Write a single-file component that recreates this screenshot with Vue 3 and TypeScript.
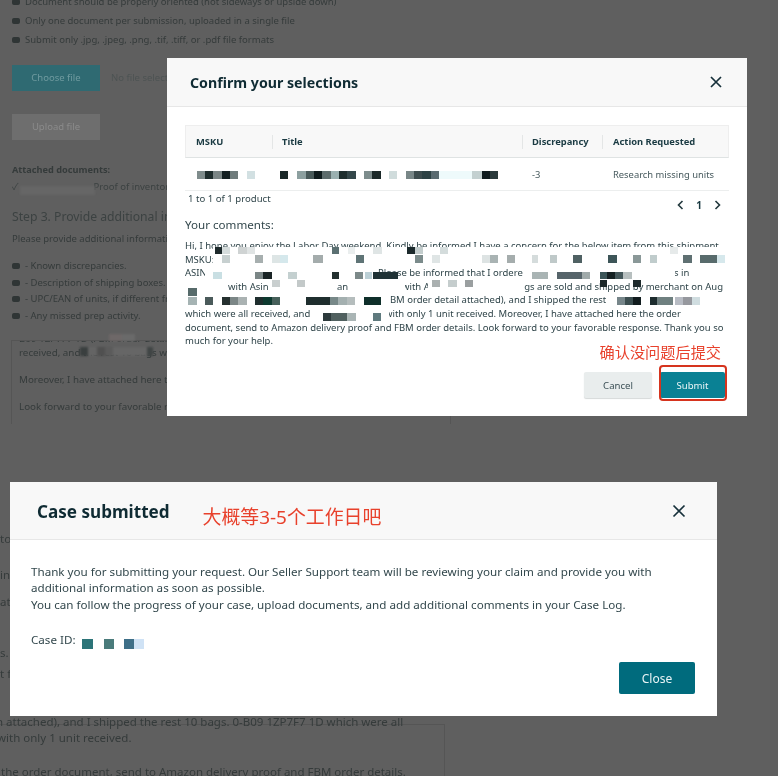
<script setup lang="ts">
type Cell = [number, number, number, number, string]
const W = '#ffffff'
const whites: Cell[] = [
  [213,247,515,20,W],[205,267,173,14,W],[523,267,152,14,W],[690,267,38,14,W],
  [185,281,43,14,W],[270,281,67,14,W],[348,281,57,14,W],[428,281,96,14,W],
  [185,294,205,14,W],[612,294,114,14,W],[310,308,79,13,W]
]
const row = (y: number, h: number, cells: [number, number, string][]): Cell[] =>
  cells.map(([a, b, c]) => [a, y, b - a, h, c] as Cell)
const cells: Cell[] = [
  ...whites,
  ...row(171,8,[[197,205,'#7f8c8c'],[205,213,'#1f2e2e'],[213,222,'#7b8686'],[222,230,'#142022'],[230,238,'#6f7c7c'],[247,255,'#d2e0e2'],
    [280,288,'#1a2828'],[297,306,'#8da0a0'],[306,314,'#495a5a'],[314,322,'#101c1e'],[322,331,'#5d6c6c'],[331,339,'#9ab0b0'],[339,347,'#1e2e2e'],[347,356,'#34474a'],
    [364,372,'#7d8c8c'],[372,381,'#1a2828'],[389,397,'#d0dcdc'],[406,414,'#788687'],[414,422,'#3d4c4e'],[422,431,'#2d4244'],[431,439,'#5a6b70'],[439,472,'#eefafb'],[472,482,'#c3d0d0'],[482,490,'#101c1e'],[490,498,'#2b3a3c']]),
  ...row(247,7,[[215,222,'#1e2a2c'],[222,230,'#d5dcdc'],[238,247,'#cfd3d3'],[247,255,'#e0e4e4'],[332,339,'#5b7072'],[348,355,'#eaeeee'],[373,382,'#dfe5e5'],[407,415,'#1c2a2c'],[415,423,'#c3cdcd'],[440,448,'#d4dcdc'],[670,678,'#e6eaea']]),
  ...row(255,8,[[222,230,'#c7d0d0'],[255,263,'#a7afaf'],[272,280,'#dde5e5'],[280,288,'#d5e8ec'],[313,323,'#a4acac'],[356,364,'#5f7476'],[415,423,'#7b8b8b'],[432,440,'#dfe5e5'],
    [482,490,'#dde3e3'],[490,498,'#a9b3b3'],[507,515,'#a5adad'],[532,538,'#d5dcdc'],[550,557,'#bfc9c9'],[573,582,'#4f6163'],[608,617,'#3d5558'],[633,641,'#8a9898'],[650,657,'#c0cccc'],[683,692,'#5f7072'],[700,717,'#586b6c'],[717,725,'#d6e8ec']]),
  ...row(272,7,[[213,222,'#c9dfe3'],[255,263,'#7b8686'],[263,272,'#1a2425'],[288,297,'#c4d0d0'],[332,339,'#23302f'],[355,363,'#7c8989'],[365,372,'#bcd0d6'],[373,398,'#1f3235'],
    [532,548,'#a9b4b4'],[557,582,'#56646a'],[582,590,'#a0aaaa'],[600,607,'#3b5558'],[607,615,'#142022'],[615,623,'#44575a'],[623,632,'#b7bfbf']]),
  ...row(280,7,[[272,280,'#c9cfcf'],[297,305,'#c3c9c9'],[432,440,'#aab0b0'],[448,457,'#c5cdcd'],[465,473,'#9a9fa0'],[600,607,'#1b2729'],[633,641,'#1e2a2c']]),
  ...row(288,8,[[188,197,'#566a6a']]),
  ...row(297,8,[[188,197,'#a5b3b3'],[205,213,'#4a5a5a'],[222,230,'#25302f'],[230,238,'#7b8686'],[238,247,'#aab2b2'],[255,263,'#1f2e2e'],[263,272,'#0e3a30'],[272,280,'#46605a'],[306,330,'#1f2e2e'],[330,338,'#778888'],[338,347,'#a4b0b0'],[347,355,'#b5bdbd'],[364,381,'#0f2f2a'],
    [617,625,'#77868a'],[625,633,'#3c4e50'],[633,641,'#111c1e'],[650,657,'#1d2c2e'],[657,673,'#6f8080'],[675,683,'#b8bcc4'],[683,692,'#96989e'],[692,700,'#d0dde0']]),
  ...row(313,8,[[323,331,'#2d3a3c'],[331,347,'#50605f'],[347,356,'#aab5b5'],[373,381,'#5f7a7e']]),
  ...row(639,10,[[82,93,'#2c7478'],[104,114,'#4a7b7b'],[124,134,'#3e6f88'],[134,144,'#cfe2f5']])
]
const cellStyle = (c: Cell) => ({ left: c[0] + 'px', top: c[1] + 'px', width: c[2] + 'px', height: c[3] + 'px', background: c[4] })
const bgCells: Cell[] = [
  ...row(334,7,[[109,122,'#6e6868'],[122,135,'#6a6a6a']]),
  ...row(347,9,[[80,88,'#3a3f3f'],[88,97,'#646464'],[97,105,'#505050'],[105,113,'#5b5b5b'],[113,147,'#666666'],[147,153,'#404545']]),
  ...row(186,9,[[20,95,'#666666']])
]
// Each comment line is a row of [text, column width]; the gaps are what the redaction later covers.
const comment: [string, number][][] = [
  [['Hi, I hope you enjoy the Labor Day weekend. Kindly be informed I have a concern for the below item from this shipment', 545]],
  [['MSKU:', 545]],
  [['ASIN', 193], ['Please be informed that I ordered', 279], ['bags in', 73]],
  [['', 43], ['with Asin', 109], ['and', 65], ['with Asin', 111], ['bags are sold and shipped by merchant on Aug', 217]],
  [['', 200], ['FBM order detail attached), and I shipped the rest', 345]],
  [['which were all received, and', 200], ['with only 1 unit received. Moreover, I have attached here the order', 345]],
  [['document, send to Amazon delivery proof and FBM order details. Look forward to your favorable response. Thank you so', 545]],
  [['much for your help.', 545]]
]
const steps = ['- Known discrepancies.', '- Description of shipping boxes.', '- UPC/EAN of units, if different from the listing.', '- Any missed prep activity.']
const rules = ['Document should be properly oriented (not sideways or upside down)', 'Only one document per submission, uploaded in a single file', 'Submit only .jpg, .jpeg, .png, .tif, .tiff, or .pdf file formats']
</script>

<template>
  <div class="screen">
    <div class="page">
      <ul class="rules">
        <li v-for="r in rules" :key="r">{{ r }}</li>
      </ul>
      <div class="file-row">
        <span class="bg-btn teal">Choose file</span>
        <span>No file selected</span>
      </div>
      <span class="bg-btn grey">Upload file</span>
      <div class="attached">Attached documents:</div>
      <div class="attached-item"><span>✓</span><span>Proof of inventory</span></div>
      <h3 class="step">Step 3. Provide additional information</h3>
      <p class="step-note">Please provide additional information about your request</p>
      <ul class="notes">
        <li v-for="s in steps" :key="s">{{ s }}</li>
      </ul>
      <div class="box-top">
        <p class="cut">B09 1ZP7F7 1D (FBM order detail attached), and I shipped</p>
        <p>received, and the rest 10 bags with only 1 unit</p>
        <p class="para">Moreover, I have attached here the order document</p>
        <p class="para">Look forward to your favorable response.</p>
      </div>
      <div class="frags">
        <p class="f1">to</p>
        <p class="f2">in</p>
        <p class="f3">ati</p>
        <p class="f4">s.</p>
        <p class="f5">t f</p>
      </div>
      <div class="box-bottom">
        <p class="first">n attached), and I shipped the rest 10 bags. 0-B09 1ZP7F7 1D which were all</p>
        <p class="second">with only 1 unit received.</p>
        <p class="para">the order document, send to Amazon delivery proof and FBM order details.</p>
      </div>
    </div>

    <div class="mosaic-layer dim-layer">
      <i v-for="(c, i) in bgCells" :key="i" :style="cellStyle(c)"></i>
    </div>

    <section class="modal confirm">
      <header class="head">
        <h2>Confirm your selections</h2>
        <svg class="x" width="12" height="12" viewBox="0 0 12 12"><path d="M1 1l10 10M11 1L1 11" /></svg>
      </header>
      <div class="body">
        <div class="tbl">
          <div class="tr th">
            <span>MSKU</span><span>Title</span><span>Discrepancy</span><span>Action Requested</span>
          </div>
          <div class="tr td">
            <span></span><span></span><span>-3</span><span>Research missing units</span>
          </div>
        </div>
        <div class="pager-row">
          <span>1 to 1 of 1 product</span>
          <span class="pager">
            <svg width="7" height="10" viewBox="0 0 7 10"><path d="M5.5 1L1.5 5l4 4" /></svg>
            <b>1</b>
            <svg width="7" height="10" viewBox="0 0 7 10"><path d="M1.5 1l4 4-4 4" /></svg>
          </span>
        </div>
        <div class="label">Your comments:</div>
        <div class="comment">
          <div v-for="(l, i) in comment" :key="i" class="line">
            <span v-for="(s, j) in l" :key="j" :style="{ width: s[1] + 'px' }">{{ s[0] }}</span>
          </div>
        </div>
        <div class="note-red">确认没问题后提交</div>
        <div class="foot">
          <button class="cancel">Cancel</button>
          <button class="submit">Submit</button>
        </div>
      </div>
    </section>

    <section class="modal done">
      <header class="head">
        <h2>Case submitted</h2>
        <span class="note-big">大概等3-5个工作日吧</span>
        <svg class="x" width="14" height="14" viewBox="0 0 14 14"><path d="M1.5 1.5l11 11M12.5 1.5l-11 11" /></svg>
      </header>
      <div class="body">
        <p>Thank you for submitting your request. Our Seller Support team will be reviewing your claim and provide you with<br />additional information as soon as possible.<br />You can follow the progress of your case, upload documents, and add additional comments in your Case Log.</p>
        <p class="case-id">Case ID:</p>
        <div class="foot"><button class="close">Close</button></div>
      </div>
    </section>

    <div class="mosaic-layer">
      <i v-for="(c, i) in cells" :key="i" :style="cellStyle(c)"></i>
    </div>
    <div class="red-ring"></div>
  </div>
</template>

<style>
html, body { margin: 0; background: #5f5f5f; }
</style>

<style scoped>
.screen {
  position: relative;
  width: 778px;
  height: 776px;
  overflow: hidden;
  background: #5f5f5f;
  font-family: "Noto Sans", "Noto Sans CJK SC", sans-serif;
}
p, h2, h3, ul { margin: 0; padding: 0; }

/* dimmed page */
.page {
  display: flex;
  flex-direction: column;
  align-items: flex-start;
  height: 776px;
  padding-left: 12px;
  box-sizing: border-box;
  color: #353b3b;
  font-size: 9.5px;
  line-height: 14px;
  white-space: nowrap;
  filter: blur(0.7px);
}
.page > * { flex-shrink: 0; }
.rules { margin-top: -8px; list-style: none; }
.rules li, .notes li { display: flex; align-items: center; gap: 5px; }
.rules li { height: 19px; }
.rules li::before, .notes li::before {
  content: "";
  width: 8px;
  height: 6px;
  border-radius: 2px;
  background: #2f3535;
}
.file-row { display: flex; align-items: center; gap: 11px; margin-top: 16px; color: #4d5353; }
.bg-btn { display: flex; align-items: center; justify-content: center; width: 88px; height: 26px; }
.teal { background: #2f6a72; color: #6f9a9f; }
.grey { margin-top: 23px; background: #6e6e6e; color: #8b8b8b; }
.attached { margin-top: 23px; font-size: 9.2px; font-weight: 700; }
.attached-item { display: flex; gap: 75px; margin-top: 3px; color: #3c4242; }
.step { margin-top: 14px; font-size: 12.2px; font-weight: 400; line-height: 18px; color: #3c4242; }
.step-note { margin-top: 6px; }
.notes { margin-top: 12px; list-style: none; }
.notes li { height: 16.6px; }
.box-top {
  width: 440px;
  height: 84px;
  margin: 16px 0 0 -1px;
  padding-left: 7px;
  overflow: hidden;
  box-sizing: border-box;
  border: 1px solid #555;
  border-bottom: 0;
  font-size: 9.8px;
  line-height: 13.5px;
}
.box-top .cut { margin-top: -9px; }
.box-top .para { margin-top: 13.5px; }
.frags { margin: 107px 0 0 -12px; font-size: 11.5px; line-height: 16px; }
.f2 { margin-top: 20px; }
.f3 { margin-top: 11px; }
.f4 { margin-top: 35px; }
.f5 { margin-top: 5px; }
.box-bottom {
  width: 445px;
  height: 80px;
  margin: 42px 0 0 -12px;
  box-sizing: border-box;
  border-top: 1px solid #555;
  border-right: 1px solid #555;
  font-size: 11.5px;
  line-height: 16.4px;
}
.box-bottom .first { margin: -11px 0 0 -4px; }
.box-bottom .second { margin: -1px 0 0 -3px; }
.box-bottom .para { margin: 18px 0 0 1px; }

/* modals */
.modal {
  position: absolute;
  display: flex;
  flex-direction: column;
  background: #fff;
  color: #33484d;
  box-sizing: border-box;
  filter: blur(0.3px);
}
.head {
  display: flex;
  flex-shrink: 0;
  align-items: center;
  background: #f8f8f8;
  border-bottom: 1px solid #e7e7e7;
  box-sizing: border-box;
}
.head h2 { color: #0f2b33; font-weight: 700; }
.x { margin-left: auto; fill: none; stroke: #16303a; stroke-width: 1.7; }
.foot { display: flex; justify-content: flex-end; margin-top: auto; }
.body { display: flex; flex: 1; flex-direction: column; }
button {
  font-family: inherit;
  padding: 0;
  border: 0;
  border-radius: 2px;
  cursor: pointer;
}

.confirm { left: 167px; top: 58px; width: 580px; height: 358px; }
.confirm .head { height: 49px; padding: 0 25px 0 23px; }
.confirm .head h2 { font-size: 14.2px; }
.confirm .body { padding: 18px; }
.tbl { font-size: 9.4px; }
.tr { display: grid; align-items: center; }
.tr span { padding-left: 10px; }
.tr span:first-child { padding-left: 11px; }
.th { grid-template-columns: 86px 250px 80px 1fr; height: 33px; background: #f8f8f8; border: 1px solid #eee; border-bottom: 1px solid #dfe3e3; box-sizing: border-box; color: #1a3a42; font-weight: 700; }
.th span { padding-left: 9px; }
.th span:first-child { padding-left: 10px; }
.th span:last-child { padding-left: 10px; }
.th span + span { border-left: 1px solid #e4e6e6; line-height: 14px; }
.td { grid-template-columns: 87px 250px 80px 1fr; height: 33px; border-bottom: 1px solid #eceeee; box-sizing: border-box; color: #46595d; }
.td span:last-child { padding-left: 11px; }
.pager-row { display: flex; justify-content: space-between; align-items: center; height: 15px; padding: 0 8px 0 3px; font-size: 9.6px; }
.pager { display: flex; align-items: center; gap: 12px; margin-top: 12px; color: #1a3a42; font-size: 10px; }
.pager svg { fill: none; stroke: #22383d; stroke-width: 1.6; }
.label { margin-top: 11px; font-size: 11.6px; line-height: 16px; }
.comment { margin-top: 6px; font-size: 9.5px; line-height: 13.6px; white-space: nowrap; color: #2f4449; }
.line { display: flex; height: 13.6px; }
.line span { flex: none; }
.note-red { position: absolute; right: 26px; top: 284px; font-size: 15.2px; line-height: 20px; color: #e8412c; }
.foot .cancel { width: 68px; height: 26px; margin-right: 8px; background: #e9eded; color: #3c5056; font-size: 9.6px; box-shadow: 0 1px 1px #d5d9d9; }
.foot .submit { width: 65px; height: 26px; margin-right: 4px; background: #0a8194; color: #e8f4f6; font-size: 9.6px; }

.done { left: 10px; top: 482px; width: 707px; height: 234px; }
.done .head { height: 58px; padding: 0 31px 0 27px; }
.done .head h2 { margin-top: 2px; font-size: 17.1px; }
.note-big { margin: 10px 0 0 33px; font-size: 18.9px; color: #e8412c; }
.done .body { padding: 23.7px 22px 22px 21px; font-size: 11.63px; line-height: 16.8px; }
.case-id { margin-top: 18.3px; }
.foot .close { width: 76px; height: 32px; background: #006b7d; color: #e8f4f6; font-size: 12px; }

/* mosaics and annotation overlays */
.mosaic-layer { position: absolute; inset: 0; pointer-events: none; filter: blur(0.5px); }
.mosaic-layer i { position: absolute; }
.dim-layer { filter: blur(1px); }
.red-ring {
  position: absolute;
  left: 659px;
  top: 365px;
  width: 68px;
  height: 36px;
  box-sizing: border-box;
  border: 2px solid #d6341e;
  border-radius: 4px;
}
</style>
